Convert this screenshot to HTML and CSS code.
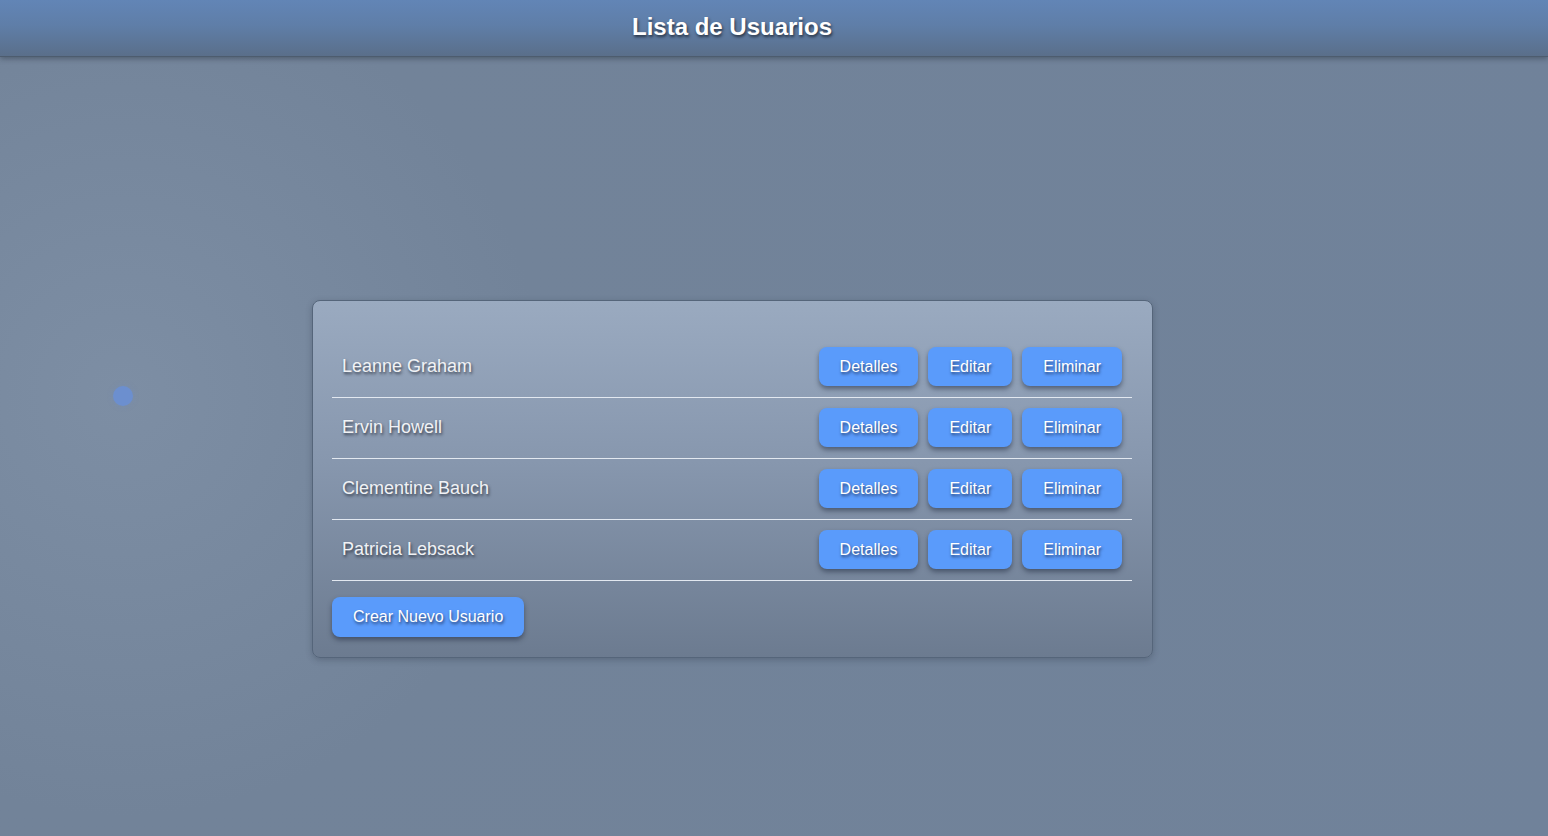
FILE: index.html
```html
<!DOCTYPE html>
<html lang="es">
<head>
<meta charset="utf-8">
<title>Lista de Usuarios</title>
<link rel="stylesheet" href="styles.css">
</head>
<body>
<header class="topbar">
  <h1 class="title">Lista de Usuarios</h1>
</header>
<span class="dot"></span>
<main class="main">
  <section class="card">
    <ul class="user-list">
      <li class="user-row">
        <span class="user-name">Leanne Graham</span>
        <div class="actions">
          <button class="btn">Detalles</button>
          <button class="btn">Editar</button>
          <button class="btn">Eliminar</button>
        </div>
      </li>
      <li class="user-row">
        <span class="user-name">Ervin Howell</span>
        <div class="actions">
          <button class="btn">Detalles</button>
          <button class="btn">Editar</button>
          <button class="btn">Eliminar</button>
        </div>
      </li>
      <li class="user-row">
        <span class="user-name">Clementine Bauch</span>
        <div class="actions">
          <button class="btn">Detalles</button>
          <button class="btn">Editar</button>
          <button class="btn">Eliminar</button>
        </div>
      </li>
      <li class="user-row">
        <span class="user-name">Patricia Lebsack</span>
        <div class="actions">
          <button class="btn">Detalles</button>
          <button class="btn">Editar</button>
          <button class="btn">Eliminar</button>
        </div>
      </li>
    </ul>
    <button class="btn btn-create">Crear Nuevo Usuario</button>
  </section>
</main>
</body>
</html>
```

FILE: styles.css
```css
* { box-sizing: border-box; }
html, body { height: 100%; }
body {
  margin: 0;
  font-family: "Liberation Sans", Arial, sans-serif;
  background: radial-gradient(circle at 123px 396px, #7d8ea4 0px, #7a8ba1 120px, #728399 420px, #70829a 100%);
  color: #fff;
  overflow: hidden;
}
.topbar {
  height: 57px;
  background: linear-gradient(to bottom, #6285b6 0%, #5f7ea8 45%, #5a6f8a 100%);
  border-bottom: 1px solid #4d5c6e;
  box-shadow: 0 2px 5px rgba(40, 50, 65, 0.45);
  display: flex;
  align-items: center;
  justify-content: center;
  padding-right: 84px;
}
.title {
  margin: 0;
  font-size: 24px;
  font-weight: bold;
  color: #fff;
  text-shadow: 1px 2px 3px rgba(20, 25, 35, 0.75);
  padding-bottom: 3px;
}
.dot {
  position: absolute;
  left: 113px;
  top: 386px;
  width: 20px;
  height: 20px;
  border-radius: 50%;
  background: #6c8fcf;
  box-shadow: 0 0 6px rgba(110, 140, 200, 0.3);
}
.main {
  display: flex;
  justify-content: center;
  padding: 243px 83px 0 0;
}
.card {
  width: 841px;
  padding: 36px 20px 20px 19px;
  border: 1px solid #55657a;
  border-radius: 8px;
  background: linear-gradient(to bottom, #9aaac0 0%, #8797ae 45%, #6c7b90 100%);
  box-shadow: 0 2px 6px rgba(40, 50, 65, 0.3);
}
.user-list {
  list-style: none;
  margin: 0 0 16px;
  padding: 0;
}
.user-row {
  display: flex;
  align-items: center;
  justify-content: space-between;
  padding: 10px 10px 11px;
  border-bottom: 1px solid #e2e8f0;
}
.user-name {
  font-size: 18px;
  color: #f0f2f5;
  text-shadow: 1px 2px 3px rgba(25, 30, 40, 0.75);
}
.actions {
  display: flex;
  gap: 10px;
}
.btn {
  font-family: "Liberation Sans", Arial, sans-serif;
  font-size: 16px;
  line-height: 19px;
  color: #fff;
  background: #5a9bfb;
  border: none;
  border-radius: 8px;
  padding: 10px 21px;
  text-shadow: 1px 2px 3px rgba(20, 30, 60, 0.75);
  box-shadow: 0 3px 5px rgba(35, 45, 65, 0.55);
  cursor: pointer;
}
.btn-create {
  padding: 10px 21px 11px;
}
```
